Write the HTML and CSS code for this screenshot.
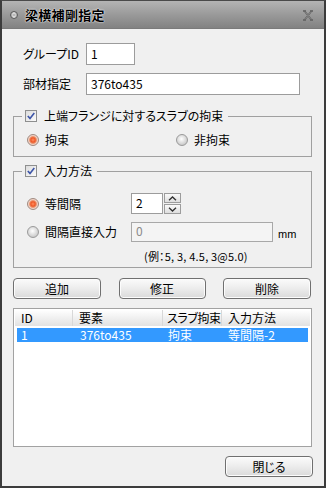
FILE: index.html
```
<!DOCTYPE html>
<html lang="ja">
<head>
<meta charset="utf-8">
<link rel="stylesheet" href="styles.css">
</head>
<body>
<div class="window">
  <div class="titlebar">
    <svg class="ticon" width="8" height="10" viewBox="0 0 8 10"><circle cx="4" cy="5" r="3.5" fill="#b8b8b8" stroke="#5a5a5a" stroke-width="1"/><path d="M2.3 4.2 L4 2.6 L5.7 4.2 M2.3 5.8 L4 7.4 L5.7 5.8" fill="none" stroke="#f4f4f4" stroke-width="1"/></svg>
    <span class="title">梁横補剛指定</span>
    <svg class="close" width="12" height="11" viewBox="0 0 12 11"><path d="M1 1 H4 M8 1 H11 M1 10 H4 M8 10 H11 M2.5 1 L9.5 10 M9.5 1 L2.5 10" fill="none" stroke="#5e5e5e" stroke-width="1.6"/><path d="M3 1.5 L9 9.5 M9 1.5 L3 9.5" fill="none" stroke="#9a9a9a" stroke-width="0.6"/></svg>
  </div>
  <div class="content">
    <div class="row r1"><span class="lbl">グループID</span><div class="input small">1</div></div>
    <div class="row r2"><span class="lbl">部材指定</span><div class="input wide">376to435</div></div>

    <fieldset class="group g1">
      <legend><span class="cb"><svg width="8" height="8" viewBox="0 0 8 8"><path d="M0.8 4 L3 6.4 L7.3 1" fill="none" stroke="#3d55a8" stroke-width="1.6"/></svg></span><span>上端フランジに対するスラブの拘束</span></legend>
      <div class="radios">
        <div class="opt"><span class="radio on"></span><span>拘束</span></div>
        <div class="opt"><span class="radio"></span><span>非拘束</span></div>
      </div>
    </fieldset>

    <fieldset class="group g2">
      <legend><span class="cb"><svg width="8" height="8" viewBox="0 0 8 8"><path d="M0.8 4 L3 6.4 L7.3 1" fill="none" stroke="#3d55a8" stroke-width="1.6"/></svg></span><span>入力方法</span></legend>
      <div class="mrow m1">
        <div class="opt col1"><span class="radio on"></span><span>等間隔</span></div>
        <div class="input spin">2</div>
        <div class="spinbtns">
          <div class="sb"><svg width="9" height="5" viewBox="0 0 9 5"><path d="M1 4.2 L4.5 1 L8 4.2" fill="none" stroke="#303030" stroke-width="1.3"/></svg></div>
          <div class="sb"><svg width="9" height="5" viewBox="0 0 9 5"><path d="M1 0.8 L4.5 4 L8 0.8" fill="none" stroke="#303030" stroke-width="1.3"/></svg></div>
        </div>
      </div>
      <div class="mrow m2">
        <div class="opt col1"><span class="radio"></span><span>間隔直接入力</span></div>
        <div class="input disabled">0</div>
        <span class="unit">mm</span>
      </div>
      <div class="example">(例：5, 3, 4.5, 3@5.0)</div>
    </fieldset>

    <div class="buttons">
      <div class="btn w88">追加</div>
      <div class="btn w87">修正</div>
      <div class="btn w88">削除</div>
    </div>

    <div class="list">
      <div class="lhead">
        <div class="hc">ID</div>
        <div class="hc">要素</div>
        <div class="hc">スラブ拘束</div>
        <div class="hc last">入力方法</div>
      </div>
      <div class="lrow sel">
        <div class="c">1</div>
        <div class="c">376to435</div>
        <div class="c">拘束</div>
        <div class="c">等間隔-2</div>
      </div>
    </div>

    <div class="footer">
      <div class="btn w88">閉じる</div>
    </div>
  </div>
</div>
</body>
</html>
```
FILE: styles.css
```
* { box-sizing: border-box; }
html, body { margin: 0; padding: 0; }
body {
  font-family: "Noto Sans CJK JP", "Liberation Sans", sans-serif;
  font-size: 12px;
  line-height: 14px;
  color: #000;
  font-feature-settings: "palt";
  background: #f0f0f0;
}
.window {
  width: 326px;
  height: 488px;
  border: 2px solid #3c3c3c;
  border-top: 1px solid #4a4a4a;
  background: #f0f0f0;
  display: flex;
  flex-direction: column;
}
.titlebar {
  height: 28px;
  flex: none;
  background: linear-gradient(#b4b4b4, #9a9a9a 50%, #828282);
  display: flex;
  align-items: center;
  padding-left: 8px;
  border-bottom: 1px solid #7a7a7a;
}
.ticon { flex: none; margin-top: 1px; }
.title {
  margin-left: 7px;
  font-weight: bold;
  font-size: 13px;
  letter-spacing: 0.3px;
  color: #000;
  text-shadow: 0 0 2px #fff, 0 0 1px #fff;
  flex: 1;
}
.close { margin-right: 10px; margin-top: 1px; }

.content {
  flex: 1;
  padding: 0 12px 0 11px;
  display: flex;
  flex-direction: column;
  white-space: nowrap;
}
.row { display: flex; align-items: center; height: 22px; }
.r1 { margin-top: 14px; }
.r2 { margin-top: 8px; }
.lbl { width: 63px; margin-left: 10px; }
.input {
  height: 22px;
  border: 1px solid #9c9c9c;
  background: #fff;
  padding: 3px 0 0 4px;
  line-height: 14px;
}
.small { width: 49px; }
.wide { width: 214px; }

.group {
  margin: 0;
  border: 1px solid #a0a0a0;
  padding: 0;
  width: 299px;
}
.g1 { margin-top: 14px; padding: 10px 0 9px 13px; }
.g2 { margin-top: 7px; padding: 15px 0 4px 13px; }
legend {
  margin-left: -5px;
  padding: 0 5px 0 3px;
  height: 14px;
  display: flex;
  align-items: center;
  gap: 7px;
}
.cb {
  width: 12px;
  height: 12px;
  border: 1px solid #8e8f8f;
  background: linear-gradient(135deg, #dcdcdc, #fbfbfb);
  display: inline-flex;
  align-items: center;
  justify-content: center;
  flex: none;
}
.radios { display: grid; grid-template-columns: 149px auto; height: 14px; }
.opt { display: flex; align-items: center; gap: 6px; }
.radio {
  width: 12px;
  height: 12px;
  border-radius: 50%;
  flex: none;
  border: 1px solid #9a9a9a;
  background: radial-gradient(circle at 45% 40%, #ffffff 0, #e6e6e6 35%, #b8b8b8 100%);
}
.radio.on {
  border-color: #a08a80;
  background: radial-gradient(circle at 50% 50%, #ff9060 0, #f05a2a 30%, #e8845a 45%, #f4d2c4 62%, #dcdcdc 100%);
}
.mrow { display: flex; align-items: center; }
.col1 { width: 104px; }
.m1 { height: 21px; }
.m2 { height: 20px; margin-top: 8px; }
.spin { width: 32px; height: 21px; padding-top: 2px; }
.spinbtns {
  margin-left: 1px;
  display: flex;
  flex-direction: column;
  gap: 1px;
}
.sb {
  width: 17px;
  height: 10px;
  border: 1px solid #9c9c9c;
  background: linear-gradient(#fafafa, #dedede);
  display: flex;
  align-items: center;
  justify-content: center;
}
.disabled {
  width: 142px;
  height: 20px;
  background: #f4f4f4;
  border-color: #a8a8a8;
  color: #8a8a8a;
  padding-top: 1px;
}
.unit { margin-left: 5px; margin-top: 4px; font-family: "Liberation Sans", sans-serif; font-size: 11px; }
.example { margin-top: 7px; padding-left: 117px; height: 14px; font-size: 11px; letter-spacing: 0.2px; }

.buttons {
  margin-top: 10px;
  display: flex;
  justify-content: space-between;
  width: 298px;
}
.btn {
  height: 21px;
  border: 1px solid #707070;
  border-radius: 4px;
  background: linear-gradient(#fbfbfb, #ececec 50%, #dadada);
  box-shadow: inset 0 0 0 1px #fcfcfc;
  display: flex;
  align-items: center;
  justify-content: center;
}
.w88 { width: 88px; }
.w87 { width: 87px; }

.list {
  margin-top: 9px;
  width: 299px;
  height: 139px;
  border: 1px solid #a2a2a2;
  background: #fff;
  padding: 1px;
}
.lhead {
  display: grid;
  grid-template-columns: 58px 90px 59px 1fr;
  height: 16px;
}
.hc {
  background: linear-gradient(#ffffff, #f0f0f0 50%, #e2e2e2);
  border-right: 1px solid #d8d8d8;
  padding-left: 6px;
  line-height: 16px;
  overflow: hidden;
}
.hc:nth-child(3) { padding-left: 4px; letter-spacing: -0.4px; }
.hc.last { border-right: none; }
.lrow {
  display: grid;
  grid-template-columns: 56px 90px 59px 1fr;
  height: 14px;
  margin: 2px 2px 0 2px;
}
.lrow.sel { background-color: #3399ff; color: #ffffff; }
.c { padding-left: 4px; line-height: 14px; }
.c + .c { padding-left: 7px; }
.c:nth-child(3) { padding-left: 5px; }
.c:nth-child(4) { padding-left: 6px; }

.footer {
  margin-top: 9px;
  display: flex;
  justify-content: flex-end;
  margin-right: -1px;
}
```
